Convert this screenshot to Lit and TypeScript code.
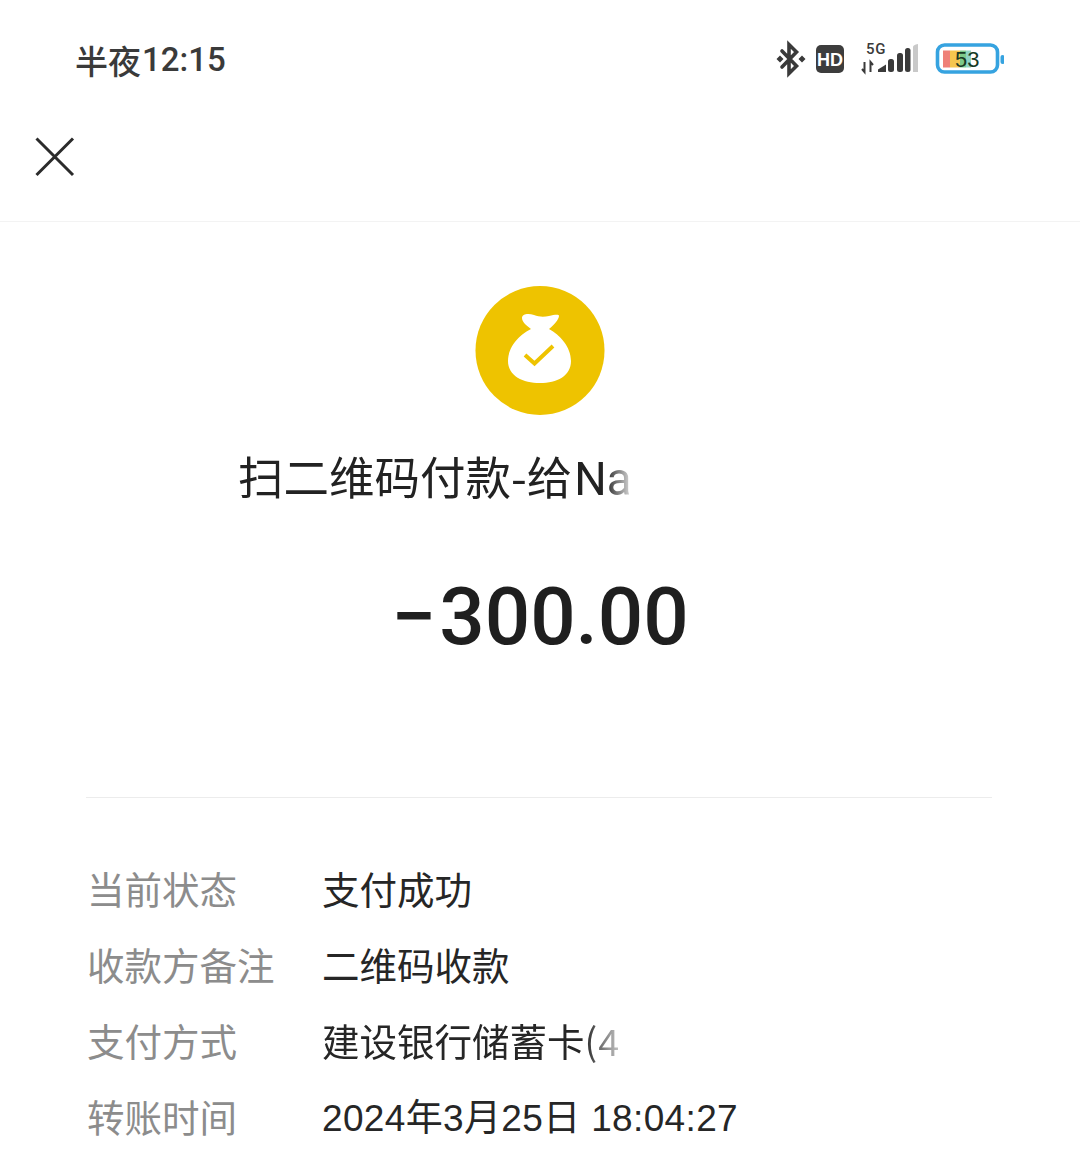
import { LitElement, html, css, svg } from "lit";
import { customElement } from "lit/decorators.js";

@customElement("app-root")
export class AppRoot extends LitElement {
  static styles = css`
    :host { display: block; width: 1080px; height: 1172px; overflow: hidden; background: #fff; font-family: Roboto, "Noto Sans CJK SC", sans-serif; color: #222; }
    .status { height: 120px; box-sizing: border-box; padding: 0 76px 0 75px; display: flex; align-items: center; justify-content: space-between; }
    .time { font: 500 33px/120px Roboto, "Noto Sans CJK SC", sans-serif; color: #3a3a3a; display: flex; }
    .time .cn { font-family: "Noto Sans CJK SC", sans-serif; margin-right: 1px; }
    .icons { display: flex; align-items: center; }
    .icons svg { display: block; }
    .nav { height: 102px; box-sizing: border-box; border-bottom: 1px solid #f3f3f3; padding: 17px 0 0 35px; }
    .nav svg { display: block; }
    .hero { display: flex; flex-direction: column; align-items: center; padding-top: 64px; }
    .logo { display: block; }
    .title { align-self: flex-start; margin: 26px 0 0 238px; width: 399px; white-space: nowrap; overflow: hidden; font: 400 45.5px/66px "Noto Sans CJK SC", sans-serif; color: #222;
      -webkit-mask-image: linear-gradient(90deg, #000 92%, rgba(0,0,0,.1) 99%); mask-image: linear-gradient(90deg, #000 92%, rgba(0,0,0,.1) 99%); }
    .title .lat { font-family: Roboto, sans-serif; margin-left: 2px; }
    .amount { margin-top: 57px; font: 500 80px/94px Roboto, sans-serif; color: #1f1f1f; }
    .amount .minus { margin-right: 3px; }
    .divider { margin: 133px 88px 0 86px; height: 1px; background: #ececec; }
    .rows { padding: 52px 0 0 87px; display: flex; flex-direction: column; }
    .row { height: 76px; display: grid; grid-template-columns: 235px auto; grid-template-rows: 76px; align-items: center; font: 400 37.5px/76px "Noto Sans CJK SC", sans-serif; white-space: nowrap; }
    .k { color: #8c8c8c; }
    .v { color: #262626; }
    .v.date { font-family: "Liberation Sans", "Noto Sans CJK SC", sans-serif; font-size: 37px; letter-spacing: 0.35px; padding-top: 6px; }
    .fade { display: block; height: 76px; -webkit-mask-image: linear-gradient(90deg, #000 88%, rgba(0,0,0,.25) 100%); mask-image: linear-gradient(90deg, #000 88%, rgba(0,0,0,.25) 100%); width: 298px; overflow: hidden; }
    .fade i { font: inherit; font-style: normal; font-family: "Liberation Sans", sans-serif; line-height: 1; margin-left: 1px; }
    .batt-t { font: 400 22px "Liberation Sans", sans-serif; fill: #173a26; }
    .sig-t { font: 500 15px Roboto, sans-serif; fill: #3a3a3a; letter-spacing: .6px; }
    .hd-t { font: 700 18px "Liberation Sans", sans-serif; fill: #fff; }
  `;

  private statusIcons() {
    return html`<svg width="230" height="40" viewBox="0 0 230 40" xmlns="http://www.w3.org/2000/svg">
      <path d="M8 11 L22.500 26 L15 33.500 V4.500 L22.500 12 L8 27" fill="none" stroke="#3a3a3a" stroke-width="3.600" stroke-linecap="round" />
      <path d="M2.500 19l3.500-3.500 3.500 3.500-3.500 3.500zM24.500 19l3.500-3.500 3.500 3.500-3.500 3.500z" fill="#3a3a3a" />
      ${svg`<rect x="42" y="5" width="28" height="28" rx="5" fill="#3d3d3d"/>
      <text class="hd-t" x="56" y="25.500" text-anchor="middle">HD</text>
      <text class="sig-t" x="102" y="14" text-anchor="middle">5G</text>
      <path d="M90.500 22v10l-2.500-3M96.500 32V22l2.500 3" stroke="#3a3a3a" stroke-width="2" fill="none"/>
      <path d="M104 32v-2.500l8-5v7.500z" fill="#3a3a3a"/>
      <rect x="114" y="19" width="6" height="13" rx="2.500" fill="#3a3a3a"/>
      <rect x="123" y="13" width="6" height="19" rx="2.500" fill="#3a3a3a"/>
      <rect x="131" y="8" width="5.500" height="24" rx="2.500" fill="#3a3a3a"/>
      <path d="M139 32V7q0-2 5-3v28z" fill="#c9c9c9"/>
      <rect x="163.500" y="5" width="60" height="27" rx="7" fill="#fff" stroke="#36a3e0" stroke-width="3.600"/>
      <rect x="169" y="10.500" width="7" height="17" fill="#ef8078"/>
      <rect x="176" y="10.500" width="10" height="17" fill="#f5c64f"/>
      <rect x="186" y="10.500" width="6" height="17" fill="#7cc98a"/>
      <rect x="192" y="10.500" width="5" height="17" fill="#8fd3c4"/>
      <text class="batt-t" x="181" y="27">53</text>
      <rect x="226.500" y="15" width="4" height="9" rx="2" fill="#36a3e0"/>`}
    </svg>`;
  }

  render() {
    return html`
      <div class="status">
        <div class="time"><span class="cn">半夜</span><span>12:15</span></div>
        <div class="icons">${this.statusIcons()}</div>
      </div>
      <div class="nav">
        <svg width="40" height="40" viewBox="0 0 40 40" fill="none" stroke="#2b2b2b" stroke-width="3">
          <path d="M1.500 1.500L38 38M38 1.500L1.500 38" />
        </svg>
      </div>
      <div class="hero">
        <svg class="logo" width="130" height="130" viewBox="0 0 130 130">
          <circle cx="65" cy="64.500" r="64.500" fill="#eec300" />
          <path fill="#fff" d="M47 32c0-4 6-5 12-3 5 2 10 2 15 1 5-1 10-2 10 0 0 3-5 9-10 13 11 6 22 18 22 32 0 15-14 22-31 22S33 90 33 75c0-14 11-26 23-32-4-3-9-7-9-11z" />
          <path fill="none" stroke="#eec300" stroke-width="4" d="M50 69l9.500 8.500L78 60" />
        </svg>
        <div class="title">扫二维码付款-给<span class="lat">Na</span></div>
        <div class="amount"><span class="minus">−</span>300.00</div>
      </div>
      <div class="divider"></div>
      <div class="rows">
        <div class="row"><span class="k">当前状态</span><span class="v">支付成功</span></div>
        <div class="row"><span class="k">收款方备注</span><span class="v">二维码收款</span></div>
        <div class="row"><span class="k">支付方式</span><span class="v"><span class="fade">建设银行储蓄卡(<i>4</i></span></span></div>
        <div class="row"><span class="k">转账时间</span><span class="v date">2024年3月25日 18:04:27</span></div>
      </div>
    `;
  }
}
